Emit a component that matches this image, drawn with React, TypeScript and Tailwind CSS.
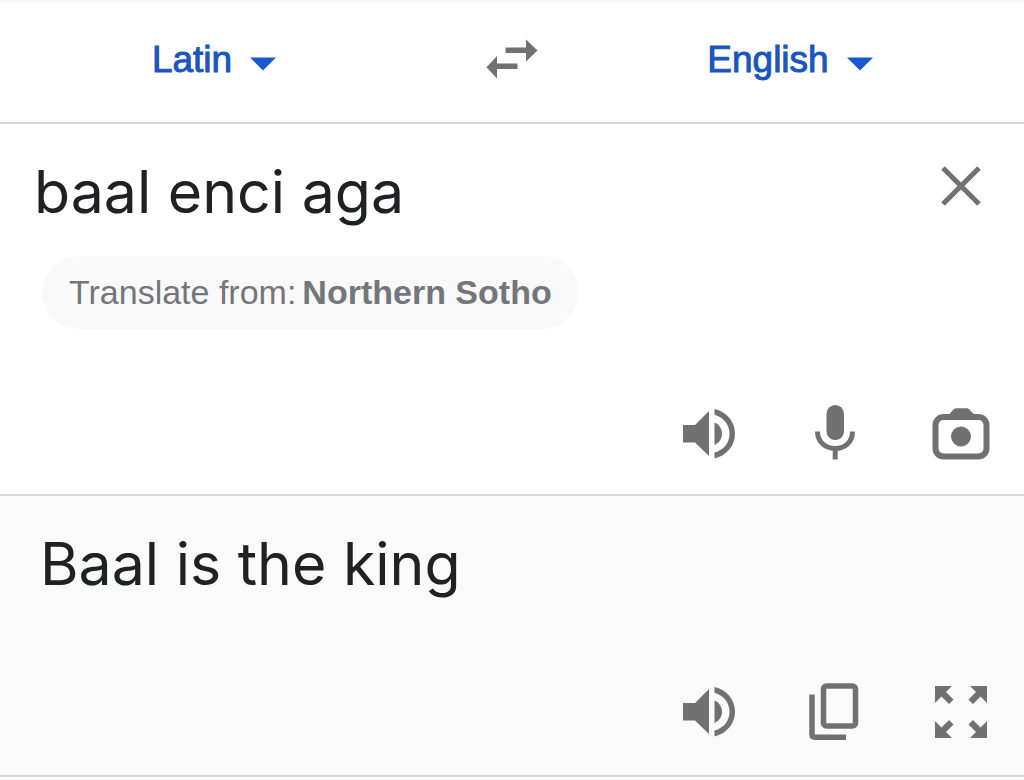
import { useState } from "react";
import type { ReactNode } from "react";

function LanguageSelect({ label, value, options }: { label: string; value: string; options: string[] }) {
  return (
    <div className="flex items-center gap-[18px] text-[#1a56bd]">
      <select
        aria-label={label}
        defaultValue={value}
        className="h-14 cursor-pointer appearance-none bg-transparent p-0 text-[37px] leading-[56px] outline-none [field-sizing:content] [-webkit-text-stroke:1px_#1a56bd]"
      >
        {options.map((o) => (
          <option key={o}>{o}</option>
        ))}
      </select>
      <svg viewBox="0 0 26 14" className="mt-2 h-3.5 w-[26px] shrink-0 fill-[#1a58cf]" aria-hidden="true">
        <path d="M0 0.5h26L13 13.5z" />
      </svg>
    </div>
  );
}

function IconButton({ label, onClick, children }: { label: string; onClick?: () => void; children: ReactNode }) {
  return (
    <button type="button" aria-label={label} onClick={onClick} className="flex size-[60px] items-center justify-center text-[#717171]">
      {children}
    </button>
  );
}

function Speaker() {
  return (
    <svg viewBox="0 0 60 60" className="size-[60px]" fill="currentColor" aria-hidden="true">
      <path d="M4 21h12L30 7v45L16 38.500H4z" />
      <path d="M35.500 18.500c4.500 2 7.500 6 7.500 11.200s-3 9.200-7.500 11.200z" />
      <path d="M35.500 5C47.500 7.800 56 17.500 56 29.700S47.500 51.500 35.500 54.500v-6C44.500 46 50.500 39 50.500 29.700S44.500 13.300 35.500 10.800z" />
    </svg>
  );
}

function Microphone() {
  return (
    <svg viewBox="0 0 60 60" className="size-[60px]" aria-hidden="true">
      <rect x="21.500" y="1" width="17.500" height="35" rx="8.750" fill="currentColor" />
      <path d="M12.500 27.500C12.500 37.500 20 44.500 30.250 44.500S47.500 37.500 47.500 27.500M30.200 44v11.500" fill="none" stroke="currentColor" strokeWidth="5" />
    </svg>
  );
}

function Camera() {
  return (
    <svg viewBox="0 0 60 60" className="size-[60px]" aria-hidden="true">
      <rect x="4.500" y="13" width="51" height="39.500" rx="8" fill="none" stroke="currentColor" strokeWidth="6" />
      <path d="M17 11.500l5.500-6q1.200-1.300 3-1.300h10q1.800 0 3 1.300l5.500 6z" fill="currentColor" />
      <circle cx="30" cy="32.500" r="10" fill="currentColor" />
    </svg>
  );
}

function Copy() {
  return (
    <svg viewBox="0 0 60 60" className="size-[60px]" fill="none" stroke="currentColor" aria-hidden="true">
      <rect x="18.500" y="4" width="32" height="40" rx="3" strokeWidth="5.500" />
      <path d="M7 12.500v40q0 2.700 2.700 2.700H41" strokeWidth="5.500" />
    </svg>
  );
}

function Expand() {
  return (
    <svg viewBox="0 0 60 60" className="size-[60px]" fill="currentColor" aria-hidden="true">
      <path d="M4 4h17l-6 6 7.500 7.500-4.500 4.500-7.500-7.500L4 21z" />
      <path d="M56 4H39l6 6-7.500 7.500L42 22l7.500-7.500L56 21z" />
      <path d="M4 56h17l-6-6 7.500-7.500L18 38l-7.500 7.500L4 39z" />
      <path d="M56 56H39l6-6-7.500-7.500L42 38l7.500 7.500L56 39z" />
    </svg>
  );
}

export default function App() {
  const [text, setText] = useState("baal enci aga");

  return (
    <main className="bg-white font-['Liberation_Sans',Arial,sans-serif]">
      <header className="grid grid-cols-[1fr_168px_1fr] items-center border-t-[3px] border-b-2 border-t-[#f8f8f8] border-b-[#d6d6d6] pt-[29px] pb-[34px]">
        <div className="flex justify-center">
          <LanguageSelect label="Source language" value="Latin" options={["Latin"]} />
        </div>
        <button type="button" aria-label="Swap languages" className="mx-auto text-[#717171]">
          <svg viewBox="0 0 52 42" className="block h-[42px] w-[52px]" fill="currentColor" aria-hidden="true">
            <path d="M19.500 8.500H40V0.500l11.500 11L40 22.500V14H19.500zM31.500 24.500H11V17L0.500 28.200 11 39.500V30H31.500z" />
          </svg>
        </button>
        <div className="flex justify-center pr-10">
          <LanguageSelect label="Target language" value="English" options={["English"]} />
        </div>
      </header>

      <section className="border-b-2 border-[#d6d6d6] pt-7 pb-[30px]">
        <div className="flex items-start justify-between pr-[33px] pl-[34px]">
          <textarea
            aria-label="Source text"
            rows={1}
            value={text}
            onChange={(e) => setText(e.target.value)}
            className="block h-20 min-w-0 flex-1 resize-none overflow-hidden bg-transparent p-0 font-[Inter,sans-serif] text-[59px] leading-[80px] text-[#202124] outline-none"
          />
          <button type="button" aria-label="Clear text" onClick={() => setText("")} className="flex size-[60px] items-center justify-center pt-2 text-[#717171]">
            <svg viewBox="0 0 40 40" className="size-10" fill="none" stroke="currentColor" strokeWidth="5" aria-hidden="true">
              <path d="M2 2l36 36M38 2L2 38" />
            </svg>
          </button>
        </div>
        <button type="button" className="mt-6 ml-[42px] block rounded-full bg-[#f9f9fa] px-[27px] py-4 text-left text-[34px] leading-[41px] text-[#73767a]">
          Translate from:<b className="ml-1.5 font-bold">Northern Sotho</b>
        </button>
        <div className="mt-[75px] flex justify-end gap-[66px] pr-[33px]">
          <IconButton label="Listen to source text"><Speaker /></IconButton>
          <IconButton label="Speak"><Microphone /></IconButton>
          <IconButton label="Translate from camera"><Camera /></IconButton>
        </div>
      </section>

      <section className="border-b-2 border-[#d6d6d6] bg-[#fafafa] pt-7 pb-[33px]">
        <p className="px-10 font-[Inter,sans-serif] text-[59px] leading-[80px] text-[#202124]">Baal is the king</p>
        <div className="mt-[78px] flex justify-end gap-[66px] pr-[33px]">
          <IconButton label="Listen to translation"><Speaker /></IconButton>
          <IconButton label="Copy translation"><Copy /></IconButton>
          <IconButton label="Full screen"><Expand /></IconButton>
        </div>
      </section>
    </main>
  );
}
